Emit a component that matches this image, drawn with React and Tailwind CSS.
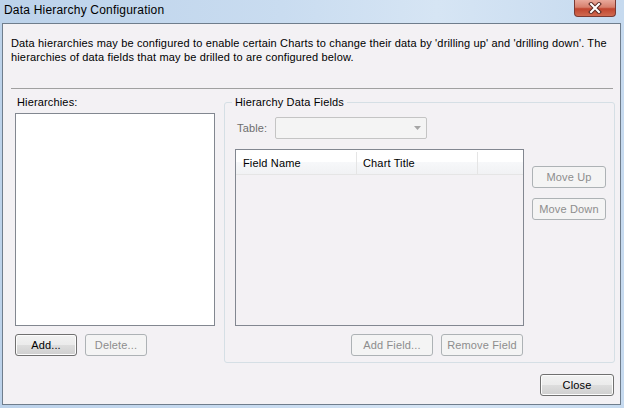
import React from 'react'

const font = { fontFamily: '"Liberation Sans", Arial, sans-serif' }

function WinButton({ children, disabled, className = '' }) {
    if (disabled) {
        return (
            <div className={`flex items-center justify-center h-[22px] rounded-[3px] border border-[#adb2b5] bg-[#f4f4f4] text-[11px] tracking-[0.15px] text-[#8d8d8d] ${className}`}>
                {children}
            </div>
        )
    }
    return (
        <div className={`flex items-center justify-center h-[22px] rounded-[3px] border border-[#707070] bg-[linear-gradient(#f2f2f2_0%,#ebebeb_50%,#dddddd_51%,#cfcfcf_100%)] text-[11px] tracking-[0.15px] text-black shadow-[inset_0_0_0_1px_#fcfcfc] ${className}`}>
            {children}
        </div>
    )
}

export default function App() {
    return (
        <div className="w-[624px] h-[408px] overflow-hidden bg-[linear-gradient(90deg,#bcd2ea_0%,#c9dcf0_45%,#d6e5f4_70%,#c6daef_100%)] flex flex-col" style={font}>
            {/* title bar */}
            <div className="h-[23px] shrink-0 flex items-start justify-between">
                <span className="pl-[4px] pt-[3px] text-[12px] leading-[15px] tracking-[0.2px] text-black">Data Hierarchy Configuration</span>
                <div className="mr-[8px] w-[42px] h-[17px] rounded-b-[4px] border border-t-0 border-[#7a3a33] bg-[linear-gradient(#e9a99b_0%,#d7806d_45%,#c0452f_55%,#d06a50_100%)] flex items-center justify-center">
                    <svg width="14" height="12" viewBox="0 0 14 12">
                        <path d="M3 2 L11 10 M11 2 L3 10" stroke="#5a2a24" strokeWidth="4" strokeLinecap="square" />
                        <path d="M3 2 L11 10 M11 2 L3 10" stroke="#ffffff" strokeWidth="2" strokeLinecap="square" />
                    </svg>
                </div>
            </div>

            {/* client area */}
            <div className="ml-[2px] w-[619px] h-[382px] border border-[#6f7d8c] bg-[#f3f1f4] pl-[8px] flex flex-col">
                <p className="pt-[12px] w-[606px] text-[11px] leading-[14px] tracking-[0.15px] text-black">
                    Data hierarchies may be configured to enable certain Charts to change their data by 'drilling up' and 'drilling down'. The hierarchies of data fields that may be drilled to are configured below.
                </p>
                <div className="mt-[24px] h-px w-[602px] bg-[#a0a0a0]"></div>

                <div className="mt-[6px] flex items-start">
                    {/* hierarchies */}
                    <div className="ml-[4px] w-[200px] flex flex-col">
                        <span className="pl-[2px] h-[14px] text-[11px] leading-[14px] tracking-[0.15px] text-black">Hierarchies:</span>
                        <div className="mt-[4px] h-[213px] border border-[#828790] bg-white"></div>
                        <div className="mt-[8px] flex gap-[8px]">
                            <WinButton className="w-[62px]">Add...</WinButton>
                            <WinButton disabled className="w-[62px]">Delete...</WinButton>
                        </div>
                    </div>

                    {/* group box */}
                    <fieldset className="ml-[9px] w-[391px] h-[268px] border border-[#d5dfe5] rounded-[3px] pl-[10px] flex flex-col">
                        <legend className="-ml-[3px] px-[3px] text-[11px] leading-[14px] tracking-[0.15px] text-black">Hierarchy Data Fields</legend>
                        <div className="mt-[8px] flex items-center">
                            <span className="pl-[2px] w-[40px] text-[11px] tracking-[0.15px] text-[#6d6d6d]">Table:</span>
                            <div className="w-[152px] h-[22px] rounded-[2px] border border-[#c4c4c4] bg-[#f4f4f4] flex items-center justify-end pr-[5px]">
                                <svg width="7" height="4" viewBox="0 0 7 4">
                                    <path d="M0 0 L7 0 L3.5 4 Z" fill="#a6a6a6" />
                                </svg>
                            </div>
                        </div>
                        <div className="mt-[10px] flex items-start">
                            <div className="flex flex-col">
                                <div className="w-[289px] h-[177px] border border-[#828790] bg-[#f3f1f4] flex flex-col">
                                    <div className="h-[25px] pt-[2px] flex bg-[linear-gradient(#ffffff_0%,#ffffff_50%,#f7f8fa_51%,#f1f2f4_100%)] border-b border-[#e5e5e5] text-[11px] tracking-[0.15px] text-black">
                                        <div className="w-[121px] pl-[7px] flex items-center border-r border-[#e5e5e5]">Field Name</div>
                                        <div className="w-[121px] pl-[6px] flex items-center border-r border-[#e5e5e5]">Chart Title</div>
                                        <div className="flex-1"></div>
                                    </div>
                                </div>
                                <div className="mt-[8px] flex justify-end gap-[8px] pr-[1px]">
                                    <WinButton disabled className="w-[82px]">Add Field...</WinButton>
                                    <WinButton disabled className="w-[82px]">Remove Field</WinButton>
                                </div>
                            </div>
                            <div className="ml-[8px] mt-[17px] flex flex-col gap-[10px]">
                                <WinButton disabled className="w-[74px]">Move Up</WinButton>
                                <WinButton disabled className="w-[74px]">Move Down</WinButton>
                            </div>
                        </div>
                    </fieldset>
                </div>

                <div className="mt-[11px] flex justify-end pr-[6px]">
                    <WinButton className="w-[74px]">Close</WinButton>
                </div>
            </div>
        </div>
    )
}
